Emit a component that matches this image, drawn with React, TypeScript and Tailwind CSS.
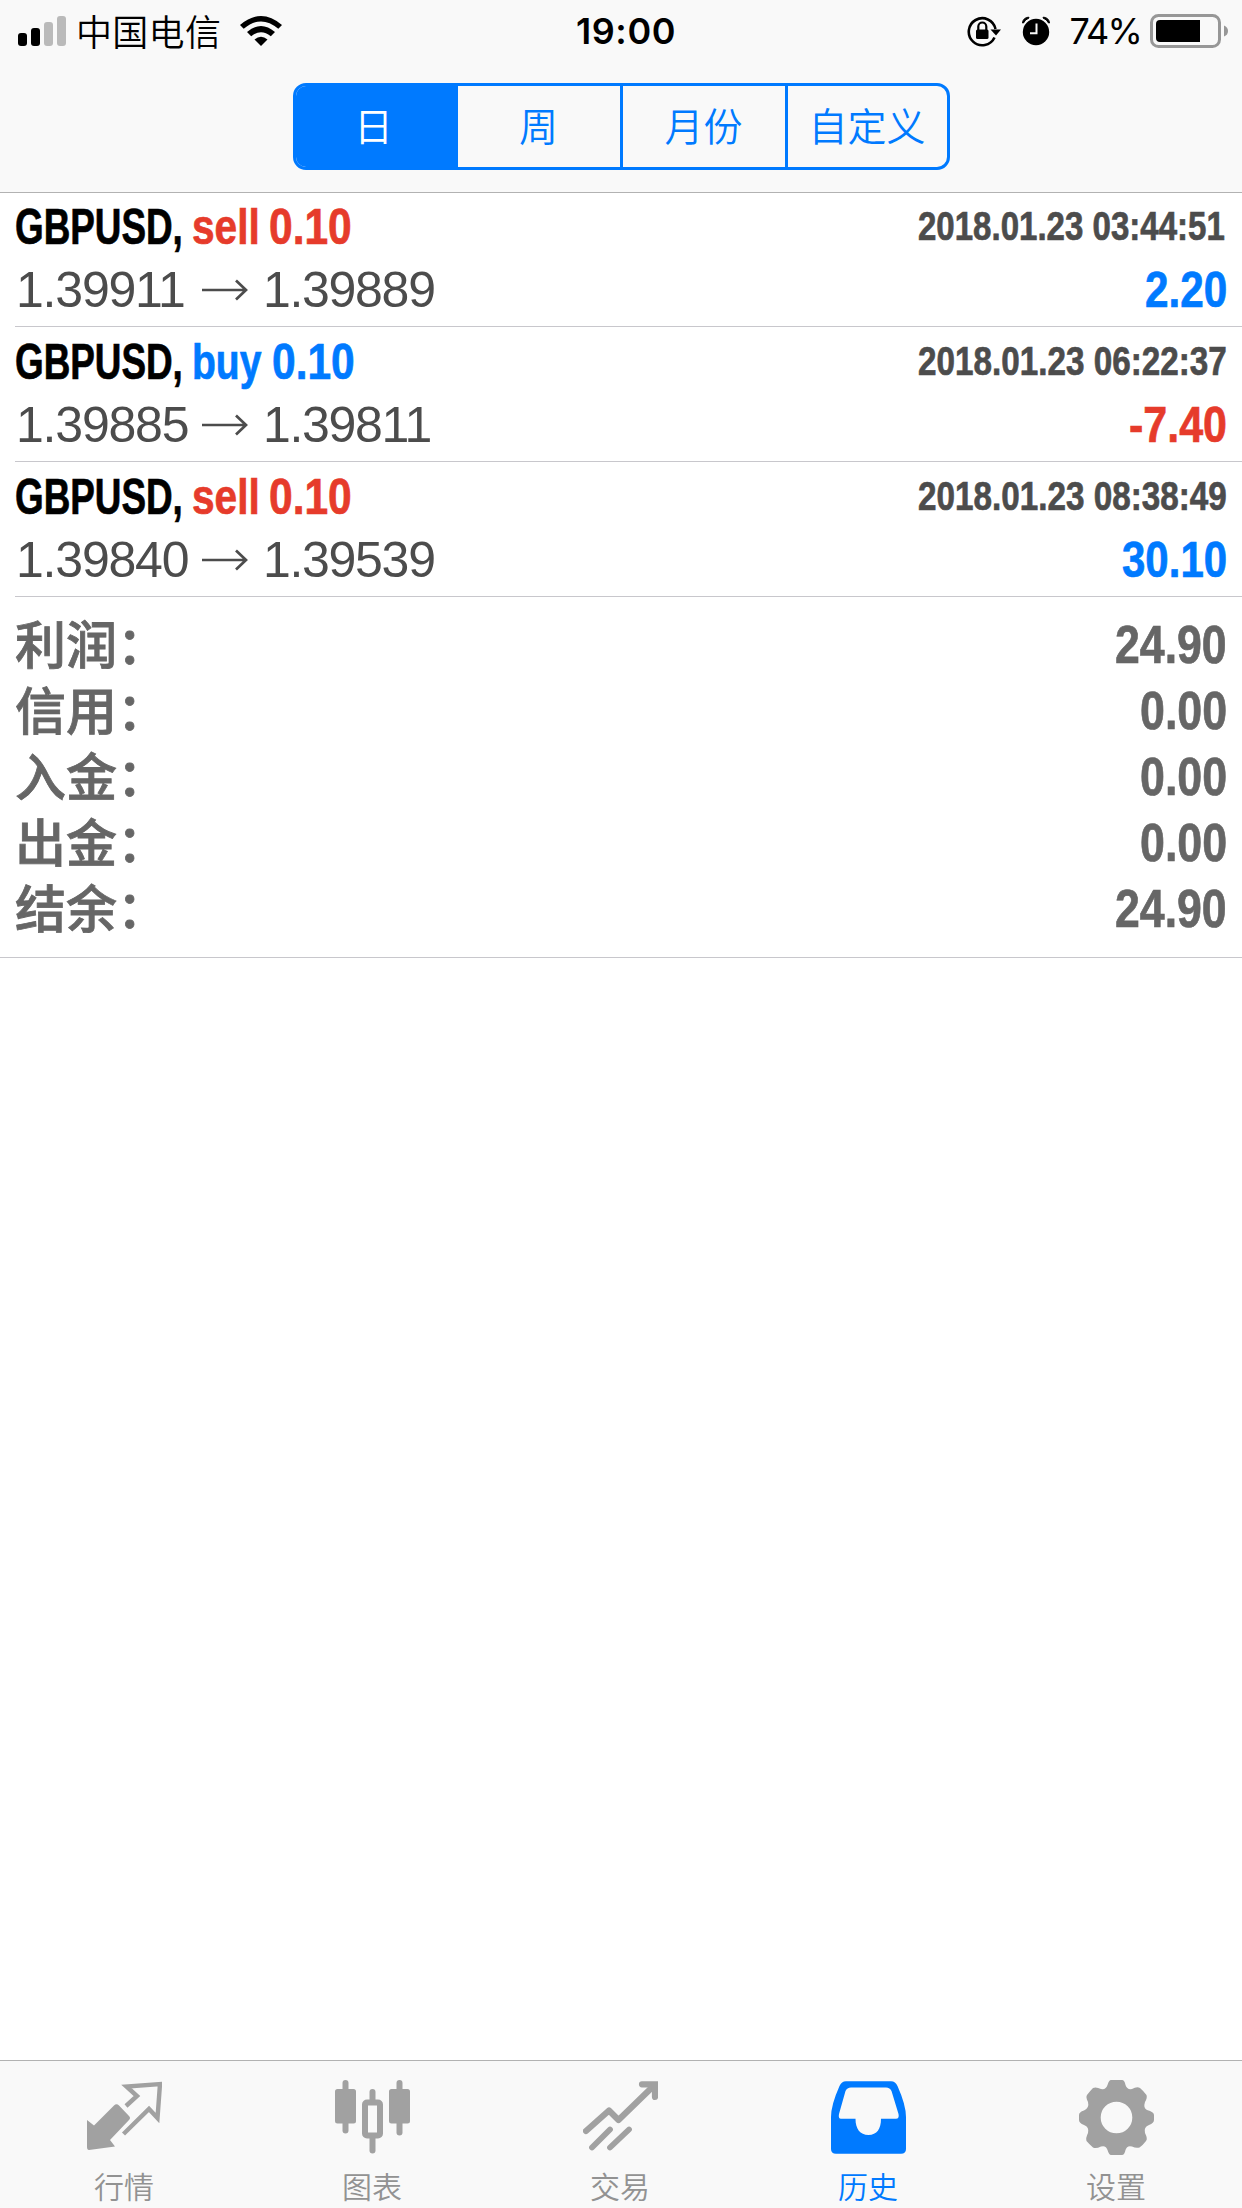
import { ReactNode, useLayoutEffect, useRef, useState } from "react";
import clsx from "clsx";

type Deal = {
  symbol: string;
  side: "sell" | "buy";
  volume: string;
  open: string;
  close: string;
  time: string;
  timeWidth: number;
  profit: string;
  profitWidth: number;
};

const deals: Deal[] = [
  { symbol: "GBPUSD,", side: "sell", volume: "0.10", open: "1.39911", close: "1.39889", time: "2018.01.23 03:44:51", timeWidth: 307, profit: "2.20", profitWidth: 82 },
  { symbol: "GBPUSD,", side: "buy", volume: "0.10", open: "1.39885", close: "1.39811", time: "2018.01.23 06:22:37", timeWidth: 309, profit: "-7.40", profitWidth: 98 },
  { symbol: "GBPUSD,", side: "sell", volume: "0.10", open: "1.39840", close: "1.39539", time: "2018.01.23 08:38:49", timeWidth: 309, profit: "30.10", profitWidth: 105 },
];

const totals = [
  { label: "利润：", value: "24.90", width: 112 },
  { label: "信用：", value: "0.00", width: 87 },
  { label: "入金：", value: "0.00", width: 87 },
  { label: "出金：", value: "0.00", width: 87 },
  { label: "结余：", value: "24.90", width: 112 },
];

const periods = ["日", "周", "月份", "自定义"];

// Condensed bold text: squeezes the line horizontally to the given width
function Condensed({ width, className, children }: { width: number; className?: string; children: ReactNode }) {
  const ref = useRef<HTMLSpanElement>(null);
  const [scale, setScale] = useState(1);

  useLayoutEffect(() => {
    if (ref.current) setScale(width / ref.current.offsetWidth);
  }, [width]);

  return (
    <span className={clsx("block shrink-0 font-bold [-webkit-text-stroke:0.7px]", className)} style={{ width }}>
      <span ref={ref} className="inline-block origin-left whitespace-nowrap" style={{ transform: `scaleX(${scale})` }}>
        {children}
      </span>
    </span>
  );
}

function StatusBar() {
  return (
    <div className="flex h-[62px] items-center justify-between pr-[14px] pl-[18px] font-['Inter','Noto_Sans_CJK_SC',sans-serif] text-[36px] leading-none text-black">
      <div className="flex w-[400px] items-center">
        <svg className="h-[30px] w-[48px]" viewBox="0 0 48 30">
          <rect x="0" y="17" width="9" height="13" rx="3" />
          <rect x="13" y="12" width="9" height="18" rx="3" />
          <rect x="26" y="6" width="9" height="24" rx="3" fill="#bababa" />
          <rect x="39" y="0" width="9" height="30" rx="3" fill="#bababa" />
        </svg>
        <span className="-mt-[2px] ml-[10px] font-['Noto_Sans_CJK_SC',sans-serif] font-[350] tracking-[0.3px]">中国电信</span>
        <svg className="ml-[19px] h-[30px] w-[42px]" viewBox="0 0 42 30">
          <path d="M0 9Q21 -9 42 9L38.300 12.800Q21 -2 3.700 12.800Z" />
          <path d="M7 16Q21 4 35 16L30.800 20.300Q21 12 11.200 20.300Z" />
          <path d="M14.500 23.500Q21 18 27.500 23.500L21 30Z" />
        </svg>
      </div>
      <span className="pl-[6px] text-[36px] font-semibold tracking-[0.6px]">19:00</span>
      <div className="flex w-[400px] items-center justify-end">
        <svg className="h-[32px] w-[34px]" viewBox="0 0 34 32">
          <path d="M27.500 22.500A13.500 13.500 0 1 1 28.500 14" fill="none" stroke="black" strokeWidth="2.600" />
          <path d="M23.500 14.500H34L29 20.500Z" />
          <rect x="9" y="14.500" width="12.500" height="9.500" rx="1.500" />
          <path d="M11.300 15V11.500a4 4 0 0 1 8 0V15" fill="none" stroke="black" strokeWidth="2.200" />
        </svg>
        <svg className="ml-[21px] h-[30px] w-[28px]" viewBox="0 0 28 30">
          <circle cx="14" cy="16" r="13.200" />
          <path d="M0.500 7A6 6 0 0 1 6.800 1.200L7 2Q3 3.500 1.500 7ZM27.500 7A6 6 0 0 0 21.200 1.200L21 2Q25 3.500 26.500 7Z" stroke="black" />
          <path d="M14.500 7.500V17.300H8" fill="none" stroke="#f9f9f9" strokeWidth="2" />
        </svg>
        <span className="ml-[19px] tracking-[-1.8px]">74%</span>
        <svg className="ml-[9px] h-[34px] w-[78px]" viewBox="0 0 78 34">
          <rect x="1.500" y="1.500" width="68" height="31" rx="7" fill="none" stroke="#979797" strokeWidth="3" />
          <path d="M10 6H50V28H10a4 4 0 0 1-4-4V10a4 4 0 0 1 4-4Z" />
          <path d="M74 11.500q4 1.500 4 5.500t-4 5.500Z" fill="#979797" />
        </svg>
      </div>
    </div>
  );
}

function PeriodPicker() {
  const [active, setActive] = useState(0);

  return (
    <div className="mx-auto mt-[21px] grid h-[87px] w-[657px] grid-cols-[162px_165px_165px_1fr] overflow-hidden rounded-[13px] border-3 border-[#007aff]">
      {periods.map((period, i) => (
        <button
          key={period}
          onClick={() => setActive(i)}
          className={clsx(
            "pt-px text-[39px] leading-none font-[350]",
            i === 0 && "pr-[3px]",
            i < periods.length - 1 && "border-r-3 border-[#007aff]",
            i === active ? "bg-[#007aff] text-white" : "text-[#007aff]"
          )}
        >
          {period}
        </button>
      ))}
    </div>
  );
}

function DealRow({ deal }: { deal: Deal }) {
  const sell = deal.side === "sell";

  return (
    <li className="ml-[15px] h-[135px] border-b border-[#c8c7cc] pt-[4px] pr-[15px]">
      <div className="flex h-[62px] justify-between">
        <div className="flex text-[50px] leading-[62px]">
          <Condensed width={168} className="text-black">{deal.symbol}</Condensed>
          <Condensed width={sell ? 67.5 : 69.5} className={clsx("ml-[9px]", sell ? "text-[#e63b2b]" : "text-[#007aff]")}>
            {deal.side}
          </Condensed>
          <Condensed width={82.5} className={clsx(sell ? "ml-[9px] text-[#e63b2b]" : "ml-[10px] text-[#007aff]")}>
            {deal.volume}
          </Condensed>
        </div>
        <div className="w-[309px] text-[41px] leading-[60px] text-[#4c4c4c]">
          <Condensed width={deal.timeWidth}>{deal.time}</Condensed>
        </div>
      </div>
      <div className="flex h-[64px] items-center justify-between text-[50px] leading-[64px]">
        <div className="flex items-center pl-px text-[#4c4c4c]">
          <span className="w-[186px] tracking-[-1.2px]">{deal.open}</span>
          <svg className="h-[22px] w-[46px]" viewBox="0 0 46 22" fill="none" stroke="#4c4c4c" strokeWidth="2.700">
            <path d="M0 11H44M34 1.500L44 11L34 20.500" />
          </svg>
          <span className="ml-[15px] tracking-[-1.3px]">{deal.close}</span>
        </div>
        <Condensed width={deal.profitWidth} className={deal.profit.startsWith("-") ? "text-[#e63b2b]" : "text-[#007aff]"}>
          {deal.profit}
        </Condensed>
      </div>
    </li>
  );
}

const tabs = [
  {
    label: "行情",
    icon: (
      <>
        <path d="M0 40L7 45.500L27 25.500Q29.500 23 32 25.500L42 36Q44 38 42 40L23 60L28 66.500L2 70Q0 70 0 67Z" fill="currentColor" />
        <path d="M39 26L50 16L39.500 6.500L73 4L70.500 38L62 29L36.500 54" fill="none" stroke="currentColor" strokeWidth="4.400" />
      </>
    ),
  },
  {
    label: "图表",
    icon: (
      <>
        <g fill="currentColor">
          <rect x="0" y="9" width="21" height="34.500" rx="2.500" />
          <rect x="7.500" y="0" width="6" height="53.500" rx="3" />
          <rect x="54" y="9" width="21" height="34.500" rx="2.500" />
          <rect x="61.500" y="0" width="6" height="55.500" rx="3" />
          <rect x="34.500" y="9" width="6" height="14" rx="3" />
          <rect x="34.500" y="54" width="6" height="19.500" rx="3" />
        </g>
        <rect x="30" y="22.500" width="15" height="33" rx="2" fill="none" stroke="currentColor" strokeWidth="6" />
      </>
    ),
  },
  {
    label: "交易",
    icon: (
      <g fill="none" stroke="currentColor" strokeWidth="6.200" strokeLinecap="round">
        <path d="M3 51L26 30.500L35.500 40L71 5.500" strokeLinejoin="round" />
        <path d="M59 4.300H72V17" />
        <path d="M9 67.500L27 49.500M27 67.500L46 49.500" strokeWidth="5.800" />
      </g>
    ),
  },
  {
    label: "历史",
    icon: (
      <path
        d="M15 1.300H60Q64.500 1.300 66.500 6Q75 25 75 37V69Q75 73.700 70 73.700H5Q0 73.700 0 69V37Q0 25 8.500 6Q10.500 1.300 15 1.300ZM20 7.500Q16 7.500 14.500 11L8 34Q7 38.800 10 38.800H24.500C24.500 49 29 55 37.500 55C46 55 50 49 50 38.800H65Q68.500 38.800 67.500 34L60.500 11Q59 7.500 55 7.500Z"
        fill="currentColor"
        fillRule="evenodd"
      />
    ),
  },
  {
    label: "设置",
    icon: (
      <path
        d="M32 0H43Q45.500 0 46.500 5Q48 10 53 9Q58 6 61 8Q64.500 11 67.500 15Q68.500 18 66 22Q64 28 68 30Q75 32 75 35V40Q75 43 70 45Q64.500 47 66 53Q69 59 67 61Q64 65 60.500 67.500Q57 68.500 53 66.500Q48 65 46.500 70Q45.500 75 43 75H32Q30 75 28.500 70Q27 65 22 66.500Q17 69 14 67.500Q10.500 64.500 7.500 61Q6.500 58 9 53Q10.500 47 5 45Q0 43 0 40V35Q0 32 5 30.500Q10.500 28 9 22Q6.500 17 8 15Q11 11 14 8Q17 6.500 22 9Q27 10 28.500 5Q30 0 32 0ZM37.500 21.700A15.800 15.800 0 1 0 37.500 53.300A15.800 15.800 0 1 0 37.500 21.700Z"
        fill="currentColor"
        fillRule="evenodd"
      />
    ),
  },
];

function TabBar() {
  const [active, setActive] = useState(3);

  return (
    <nav className="grid h-[148px] grid-cols-5 border-t border-[#b2b2b2] bg-[#f9f9f9] pr-[2px]">
      {tabs.map((tab, i) => (
        <button
          key={tab.label}
          onClick={() => setActive(i)}
          className={clsx("flex flex-col items-center pt-[19px]", i === active ? "text-[#007aff]" : "text-[#a1a1a1]")}
        >
          <svg className="h-[75px] w-[75px]" viewBox="0 0 75 75">{tab.icon}</svg>
          <span className={clsx("mt-[17px] text-[30px] leading-[32px] font-[350]", i !== active && "text-[#929292]")}>{tab.label}</span>
        </button>
      ))}
    </nav>
  );
}

export default function App() {
  return (
    <div className="flex h-[2208px] w-[1242px] flex-col bg-white font-['Liberation_Sans','Noto_Sans_CJK_SC',sans-serif]">
      <header className="h-[192px] bg-[#f9f9f9] shadow-[0_1px_0_#b2b2b2]">
        <StatusBar />
        <PeriodPicker />
      </header>

      <main className="flex-1">
        <ul>
          {deals.map((deal) => (
            <DealRow key={deal.time} deal={deal} />
          ))}
        </ul>
        <div className="h-[361px] border-b border-[#c8c7cc] px-[15px] pt-[15px] text-[53px] leading-[66px] text-[#666666]">
          {totals.map((row) => (
            <div key={row.label} className="flex h-[66px] justify-between">
              <span className="text-[51px] leading-[69px] font-medium [-webkit-text-stroke:0.8px]">{row.label}</span>
              <Condensed width={row.width}>{row.value}</Condensed>
            </div>
          ))}
        </div>
      </main>

      <TabBar />
    </div>
  );
}
